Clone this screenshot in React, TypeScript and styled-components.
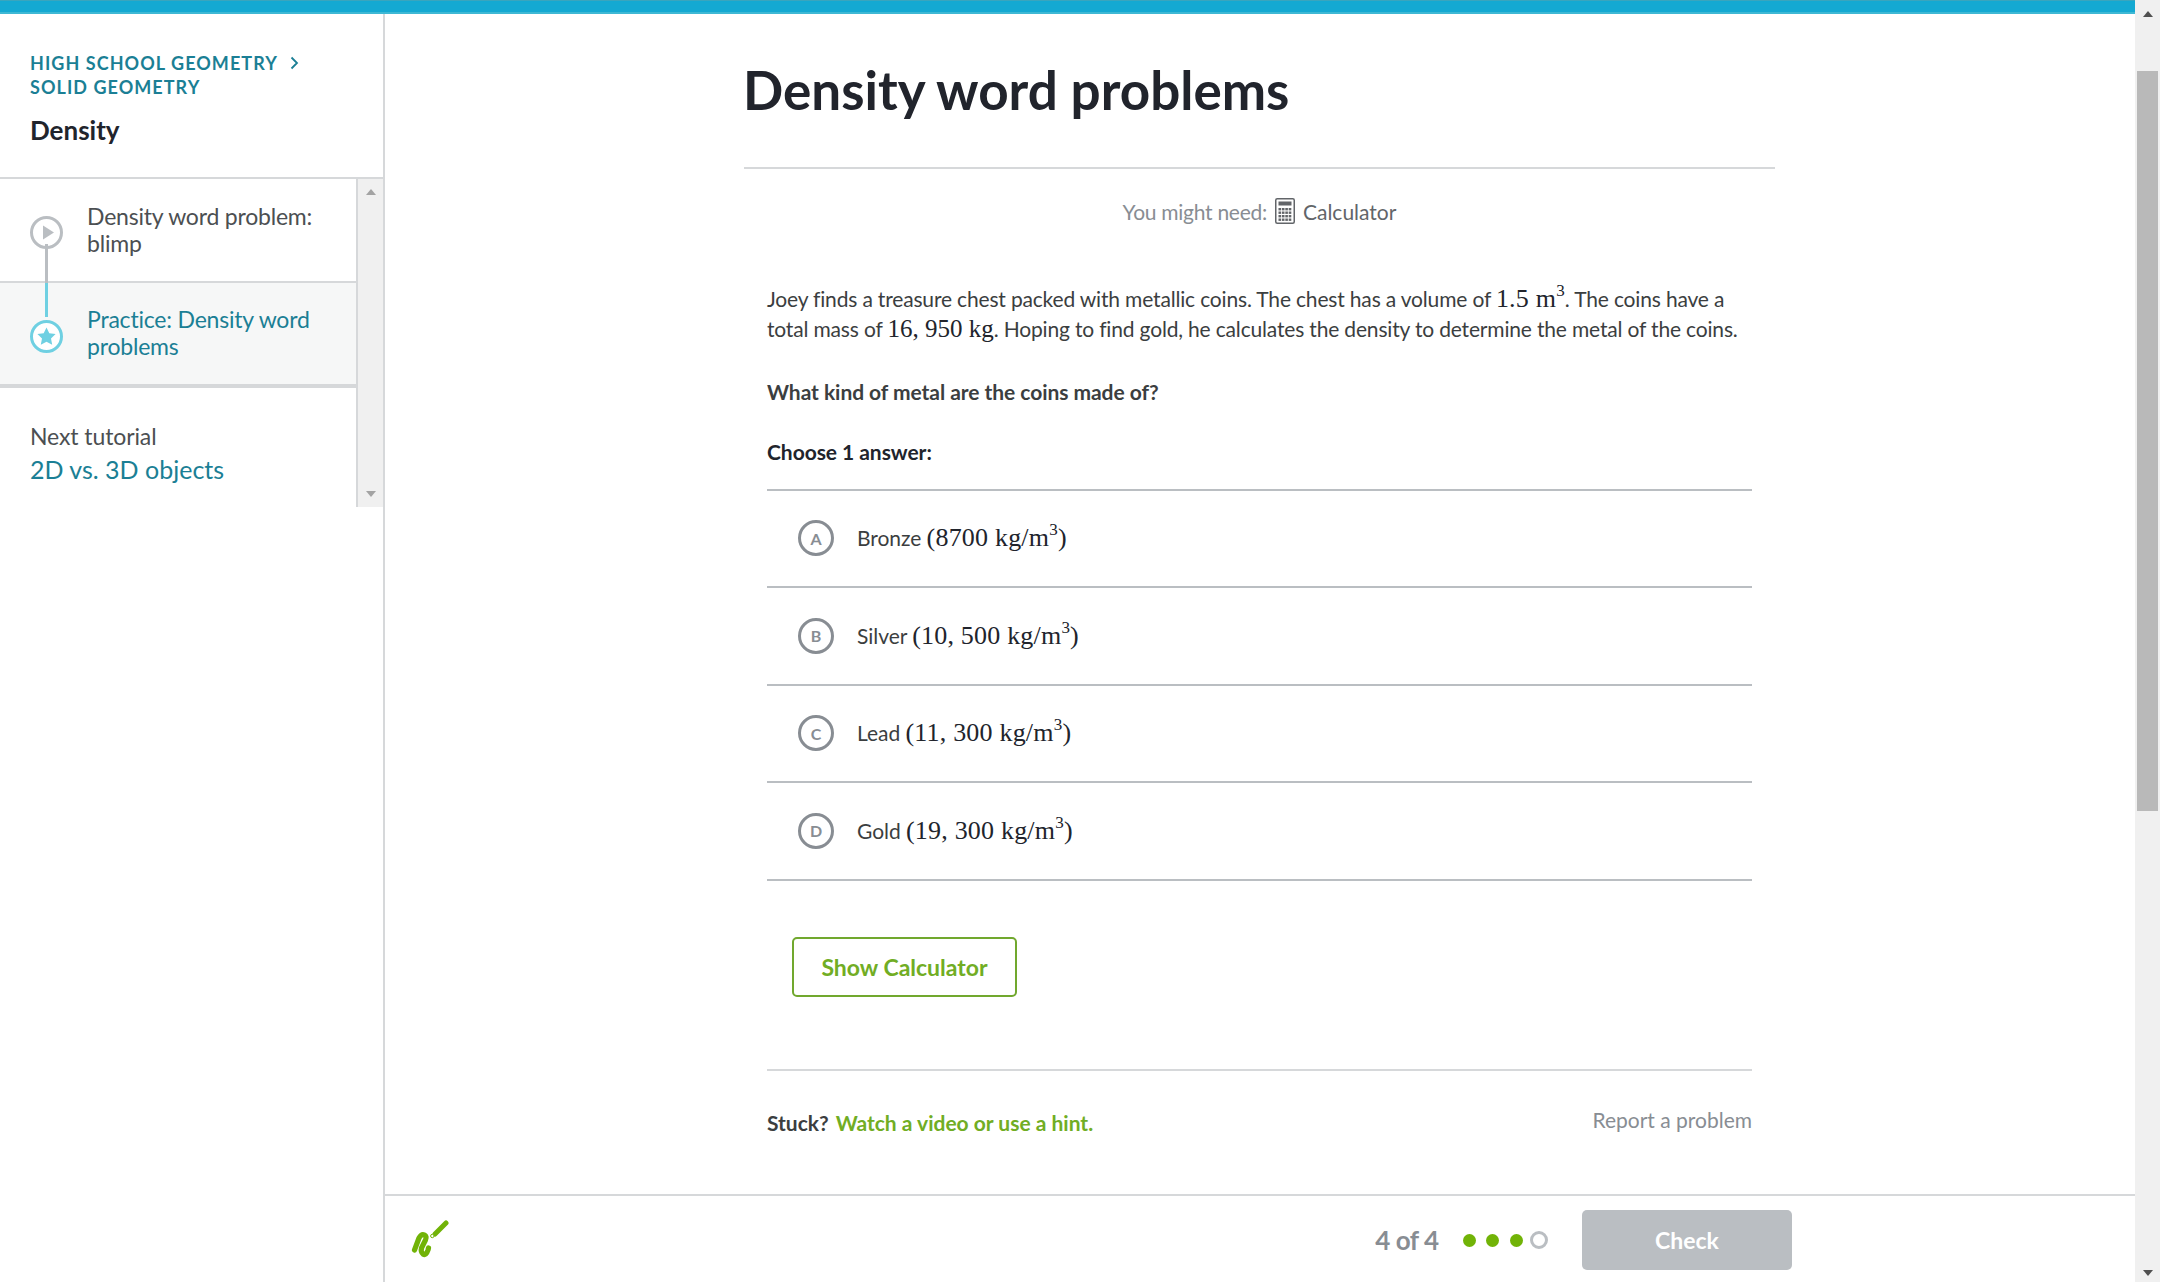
import React from "react";
import styled, { createGlobalStyle } from "styled-components";

const Global = createGlobalStyle`
  html, body { margin: 0; padding: 0; background: #fff; overflow: hidden; }
  * { box-sizing: border-box; }
  body { font-family: Lato, "Open Sans", sans-serif; color: #3b3e40; }
`;

const Page = styled.div`
  width: 2160px;
  height: 1282px;
  display: flex;
  overflow: hidden;
`;
const PageColumn = styled.div`
  width: 2135px;
  display: flex;
  flex-direction: column;
`;
const TopBar = styled.div`
  height: 14px;
  flex: none;
  background: #14a9d2;
  border-top: 1px solid #3aa5bd;
  border-bottom: 2px solid #3fb8d4;
`;
const Body = styled.div`
  flex: 1;
  display: flex;
  min-height: 0;
`;
const Sidebar = styled.aside`
  width: 385px;
  flex: none;
  border-right: 2px solid #d6d8da;
`;
const SideHeader = styled.div`
  height: 165px;
  padding: 37px 0 0 30px;
  border-bottom: 2px solid #d6d8da;
`;
const Crumb = styled.div`
  font-size: 18px;
  line-height: 24px;
  font-weight: 700;
  letter-spacing: 1.05px;
  color: #1b7f95;
  text-transform: uppercase;
  display: flex;
  align-items: center;
  gap: 12px;
`;
const SideTitle = styled.div`
  margin-top: 16px;
  font-size: 26px;
  line-height: 30px;
  font-weight: 700;
  color: #21242c;
`;
const SideScroll = styled.div`
  height: 328px;
  display: flex;
`;
const SideList = styled.div`
  width: 356px;
  flex: none;
`;
const LessonRow = styled.div<{ $active?: boolean }>`
  height: ${(p) => (p.$active ? 105 : 104)}px;
  display: flex;
  align-items: center;
  gap: 24px;
  padding-left: 30px;
  padding-bottom: ${(p) => (p.$active ? 1 : 0)}px;
  font-size: 23px;
  line-height: 27px;
  letter-spacing: -0.2px;
  color: ${(p) => (p.$active ? "#1b7f95" : "#4c4f52")};
  background: ${(p) => (p.$active ? "#f6f7f7" : "#fff")};
  border-bottom: ${(p) => (p.$active ? 4 : 2)}px solid #d6d8da;
`;
const LessonIcon = styled.div<{ $down?: boolean; $up?: boolean }>`
  position: relative;
  width: 33px;
  height: 33px;
  flex: none;
  top: ${(p) => (p.$up ? 3.5 : 2)}px;
  &::after {
    content: "";
    position: absolute;
    left: 15px;
    width: 3px;
    ${(p) => (p.$down ? "top: 28px; height: 39px; background: #babec2;" : "")}
    ${(p) => (p.$up ? "top: -37px; height: 34px; background: #6fd0e2;" : "")}
  }
`;
const NextBlock = styled.div`
  padding: 33px 0 0 30px;
`;
const NextLabel = styled.div`
  font-size: 23px;
  line-height: 30px;
  letter-spacing: -0.1px;
  color: #4c4f52;
`;
const NextLink = styled.div`
  font-size: 25px;
  line-height: 36px;
  color: #1b7f95;
`;
const ScrollStrip = styled.div<{ $page?: boolean }>`
  flex: none;
  width: ${(p) => (p.$page ? 25 : 27)}px;
  background: #f0f0f0;
  display: flex;
  flex-direction: column;
  align-items: center;
  justify-content: space-between;
  border-left: ${(p) => (p.$page ? "0" : "2px solid #d6d8da")};
  padding: ${(p) => (p.$page ? "11px 0 6px" : "10px 0 10px")};
`;
const ArrowUp = styled.div<{ $dark?: boolean }>`
  width: 0;
  height: 0;
  border-left: 5.5px solid transparent;
  border-right: 5.5px solid transparent;
  border-bottom: 6px solid ${(p) => (p.$dark ? "#505050" : "#a3a3a3")};
`;
const ArrowDown = styled.div<{ $dark?: boolean }>`
  width: 0;
  height: 0;
  border-left: 5.5px solid transparent;
  border-right: 5.5px solid transparent;
  border-top: 6px solid ${(p) => (p.$dark ? "#505050" : "#a3a3a3")};
`;
const PageTrack = styled.div`
  flex: 1;
  width: 100%;
  display: flex;
  flex-direction: column;
  align-items: center;
  padding-top: 54px;
  margin-bottom: 8px;
`;
const PageThumb = styled.div`
  width: 21px;
  height: 740px;
  background: #b9b9b9;
`;
const Main = styled.main`
  flex: 1;
  display: flex;
  flex-direction: column;
  min-width: 0;
`;
const Content = styled.div`
  flex: 1;
  padding-left: 359px;
`;
const Exercise = styled.div`
  width: 1031px;
`;
const Title = styled.h1`
  margin: 0;
  height: 155px;
  padding-top: 44px;
  border-bottom: 2px solid #d6d8da;
  font-size: 53px;
  line-height: 64px;
  font-weight: 700;
  text-indent: -1px;
  color: #21242c;
`;
const Need = styled.div`
  height: 54px;
  margin-top: 15px;
  display: flex;
  align-items: center;
  justify-content: center;
  gap: 8px;
  font-size: 21px;
  color: #888d93;
`;
const NeedLabel = styled.span`
  letter-spacing: -0.27px;
`;
const NeedTool = styled.span`
  color: #626569;
`;
const Problem = styled.div`
  padding: 0 23px;
`;
const Paragraph = styled.p`
  margin: 45.5px 0 0;
  font-size: 21px;
  line-height: 30px;
  letter-spacing: -0.17px;
  color: #3b3e40;
`;
const Question = styled.p`
  margin: 33px 0 0;
  font-size: 21px;
  line-height: 30px;
  font-weight: 700;
  letter-spacing: -0.05px;
  color: #3b3e40;
`;
const Choose = styled(Question)`
  margin-top: 30px;
  color: #21242c;
`;
const Choices = styled.div`
  margin-top: 22px;
  border-top: 2px solid #babec2;
`;
const Choice = styled.div`
  height: 97.5px;
  display: flex;
  align-items: center;
  gap: 23px;
  padding-left: 31px;
  border-bottom: 2px solid #babec2;
  font-size: 21px;
  letter-spacing: -0.05px;
  color: #3b3e40;
`;
const Letter = styled.div`
  width: 36px;
  height: 36px;
  flex: none;
  border-radius: 50%;
  border: 3px solid #888d93;
  display: flex;
  align-items: center;
  justify-content: center;
  font-size: 16px;
  font-weight: 700;
  color: #888d93;
`;
const MathText = styled.span<{ $small?: boolean }>`
  font-family: "Liberation Serif", serif;
  font-size: ${(p) => (p.$small ? 25 : 26)}px;
  letter-spacing: ${(p) => (p.$small ? 0 : 0.2)}px;
  color: #21242c;
`;
const Sup = styled.span`
  font-size: 17px;
  vertical-align: 11px;
  line-height: 0;
`;
const ShowCalc = styled.button`
  display: block;
  margin: 56px 0 0 25px;
  width: 225px;
  height: 60px;
  background: #fff;
  border: 2px solid #71a82e;
  border-radius: 5px;
  font-family: inherit;
  font-size: 23px;
  font-weight: 700;
  color: #71ad24;
`;
const Stuck = styled.div`
  margin-top: 72px;
  padding-top: 34px;
  border-top: 2px solid #d6d8da;
  display: flex;
  justify-content: space-between;
  align-items: center;
  font-size: 21px;
  line-height: 30px;
`;
const StuckText = styled.span`
  font-weight: 700;
  color: #3b3e40;
`;
const HintLink = styled.span`
  margin-left: 7px;
  color: #71ad24;
`;
const Report = styled.span`
  color: #888d93;
  margin-bottom: 6px;
`;
const Footer = styled.footer`
  height: 88px;
  flex: none;
  border-top: 2px solid #d6d8da;
  display: flex;
  align-items: center;
  padding: 2px 0 0 24px;
`;
const Progress = styled.div`
  margin-left: auto;
  display: flex;
  align-items: center;
`;
const Count = styled.span`
  font-size: 26px;
  font-weight: 700;
  letter-spacing: -0.5px;
  color: #888d93;
  margin-right: 24px;
`;
const Dots = styled.div`
  display: flex;
  align-items: center;
  gap: 10.5px;
  margin-right: 34px;
`;
const Dot = styled.span<{ $empty?: boolean }>`
  width: ${(p) => (p.$empty ? 18 : 13)}px;
  height: ${(p) => (p.$empty ? 18 : 13)}px;
  margin-left: ${(p) => (p.$empty ? -3 : 0)}px;
  border-radius: 50%;
  background: ${(p) => (p.$empty ? "#fff" : "#71b307")};
  border: ${(p) => (p.$empty ? "3px solid #babec2" : "0")};
`;
const CheckButton = styled.button`
  width: 210px;
  height: 60px;
  margin-right: 343px;
  border: 0;
  border-radius: 5px;
  background: #babec2;
  font-family: inherit;
  font-size: 23px;
  font-weight: 700;
  color: #fff;
`;

const PlayIcon = () => (
  <svg width="33" height="33" viewBox="0 0 33 33">
    <circle cx="16.5" cy="16.5" r="15" fill="#fff" stroke="#babec2" strokeWidth="3" />
    <path d="M13 9.5 L24 16.5 L13 23.5 Z" fill="#babec2" />
  </svg>
);
const StarIcon = () => (
  <svg width="33" height="33" viewBox="0 0 33 33">
    <circle cx="16.5" cy="16.5" r="15" fill="#fff" stroke="#6fd0e2" strokeWidth="3" />
    <path
      d="M16.5 7.5 L19.3 13.3 L25.6 14.1 L21 18.5 L22.2 24.8 L16.5 21.7 L10.8 24.8 L12 18.5 L7.4 14.1 L13.7 13.3 Z"
      fill="#6fd0e2"
    />
  </svg>
);
const Chevron = () => (
  <svg width="9" height="14" viewBox="0 0 9 14">
    <path d="M1.5 1.5 L7 7 L1.5 12.5" fill="none" stroke="#1b7f95" strokeWidth="1.8" />
  </svg>
);
const CalculatorIcon = () => (
  <svg width="20" height="26" viewBox="0 0 20 26">
    <rect x="0.75" y="0.75" width="18.5" height="24.5" rx="1.5" fill="#fff" stroke="#626569" strokeWidth="1.5" />
    <rect x="3.5" y="3.5" width="13" height="4" fill="#626569" />
    {[10, 13.5, 17, 20.5].map((y) =>
      [3.5, 6.9, 10.3, 13.7].map((x) => (
        <rect key={`${x}-${y}`} x={x} y={y} width="2.6" height="2.4" fill="#626569" />
      ))
    )}
  </svg>
);
const Logo = () => (
  <svg width="40" height="42" viewBox="0 0 40 42">
    <path
      d="M5.5 31 L10 19 Q12.5 14.5 15.5 16 Q18 17.5 16.5 21 L12.5 29 Q11.5 33 14 35 Q17 37 19 31 L19.5 29"
      fill="none"
      stroke="#71b307"
      strokeWidth="5.2"
      strokeLinecap="round"
      strokeLinejoin="round"
    />
    <path d="M26 15 L37 4" fill="none" stroke="#71b307" strokeWidth="5" strokeLinecap="round" />
    <circle cx="23.3" cy="17" r="1.7" fill="#fff" stroke="#71b307" strokeWidth="1" />
  </svg>
);

const Unit = () => (
  <>
    kg/m<Sup>3</Sup>
  </>
);

const choices = [
  { letter: "A", name: "Bronze", value: "8700" },
  { letter: "B", name: "Silver", value: "10, 500" },
  { letter: "C", name: "Lead", value: "11, 300" },
  { letter: "D", name: "Gold", value: "19, 300" },
];

export default function App() {
  return (
    <Page>
      <Global />
      <PageColumn>
        <TopBar />
        <Body>
          <Sidebar>
            <SideHeader>
              <Crumb>
                High School Geometry <Chevron />
              </Crumb>
              <Crumb>Solid Geometry</Crumb>
              <SideTitle>Density</SideTitle>
            </SideHeader>
            <SideScroll>
              <SideList>
                <LessonRow>
                  <LessonIcon $down>
                    <PlayIcon />
                  </LessonIcon>
                  <div>
                    Density word problem:
                    <br />
                    blimp
                  </div>
                </LessonRow>
                <LessonRow $active>
                  <LessonIcon $up>
                    <StarIcon />
                  </LessonIcon>
                  <div>
                    Practice: Density word
                    <br />
                    problems
                  </div>
                </LessonRow>
                <NextBlock>
                  <NextLabel>Next tutorial</NextLabel>
                  <NextLink>2D vs. 3D objects</NextLink>
                </NextBlock>
              </SideList>
              <ScrollStrip>
                <ArrowUp />
                <ArrowDown />
              </ScrollStrip>
            </SideScroll>
          </Sidebar>
          <Main>
            <Content>
              <Exercise>
                <Title>Density word problems</Title>
                <Need>
                  <NeedLabel>You might need:</NeedLabel>
                  <CalculatorIcon />
                  <NeedTool>Calculator</NeedTool>
                </Need>
                <Problem>
                  <Paragraph>
                    Joey finds a treasure chest packed with metallic coins. The chest has a volume of{" "}
                    <MathText>
                      1.5 m<Sup>3</Sup>
                    </MathText>
                    . The coins have a
                    <br />
                    total mass of <MathText $small>16, 950 kg</MathText>. Hoping to find gold, he calculates the density to determine the metal of the coins.
                  </Paragraph>
                  <Question>What kind of metal are the coins made of?</Question>
                  <Choose>Choose 1 answer:</Choose>
                  <Choices>
                    {choices.map((c) => (
                      <Choice key={c.letter}>
                        <Letter>{c.letter}</Letter>
                        <div>
                          {c.name}{" "}
                          <MathText>
                            ({c.value} <Unit />)
                          </MathText>
                        </div>
                      </Choice>
                    ))}
                  </Choices>
                  <ShowCalc>Show Calculator</ShowCalc>
                  <Stuck>
                    <StuckText>
                      Stuck?<HintLink>Watch a video or use a hint.</HintLink>
                    </StuckText>
                    <Report>Report a problem</Report>
                  </Stuck>
                </Problem>
              </Exercise>
            </Content>
            <Footer>
              <Logo />
              <Progress>
                <Count>4 of 4</Count>
                <Dots>
                  <Dot />
                  <Dot />
                  <Dot />
                  <Dot $empty />
                </Dots>
                <CheckButton>Check</CheckButton>
              </Progress>
            </Footer>
          </Main>
        </Body>
      </PageColumn>
      <ScrollStrip $page>
        <ArrowUp $dark />
        <PageTrack>
          <PageThumb />
        </PageTrack>
        <ArrowDown $dark />
      </ScrollStrip>
    </Page>
  );
}
